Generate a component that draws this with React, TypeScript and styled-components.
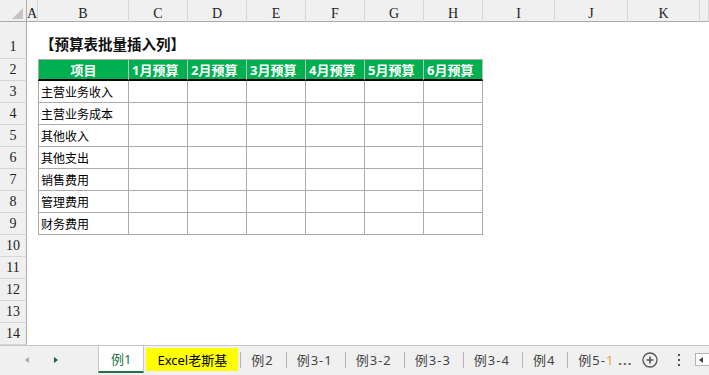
import React from "react";
import styled, { createGlobalStyle } from "styled-components";

const GlobalStyle = createGlobalStyle`
  html, body {
    margin: 0;
    padding: 0;
    background: #ffffff;
  }
  #root {
    width: 709px;
    height: 375px;
    overflow: hidden;
  }
`;

const LETTERS = ["A", "B", "C", "D", "E", "F", "G", "H", "I", "J", "K", ""];
const MONTHS = [1, 2, 3, 4, 5, 6];
const ITEMS = ["主营业务收入", "主营业务成本", "其他收入", "其他支出", "销售费用", "管理费用", "财务费用"];
const TABS = ["例2", "例3-1", "例3-2", "例3-3", "例3-4", "例4"];

const Window = styled.div`
  width: 709px;
  height: 375px;
  display: flex;
  flex-direction: column;
  font-family: "Noto Sans", "Noto Sans CJK SC", sans-serif;
`;

const Sheet = styled.div`
  display: grid;
  grid-template-columns: 27px 11px 91px repeat(6, 59px) 72px 73px 72px 1fr;
  grid-template-rows: 22px 37px repeat(13, 22px);
  background: #ffffff;
`;

const Corner = styled.div`
  position: relative;
  background: #f0f0f0;
  border-right: 1px solid #ababab;
  border-bottom: 1px solid #ababab;
  box-sizing: border-box;

  &::after {
    content: "";
    position: absolute;
    right: 3px;
    bottom: 2px;
    width: 0;
    height: 0;
    border-left: 11px solid transparent;
    border-bottom: 11px solid #c4c4c4;
  }
`;

const ColHead = styled.div`
  display: flex;
  justify-content: center;
  align-items: center;
  padding-top: 6px;
  box-sizing: border-box;
  background: #f0f0f0;
  border-right: 1px solid #d6d6d6;
  border-bottom: 1px solid #ababab;
  font-family: "Liberation Serif", "DejaVu Serif", serif;
  font-size: 14px;
  color: #222;
`;

const RowHead = styled.div<{ $tall?: boolean }>`
  display: flex;
  justify-content: center;
  align-items: ${({ $tall }) => ($tall ? "flex-end" : "center")};
  padding-bottom: ${({ $tall }) => ($tall ? "3px" : "0")};
  box-sizing: border-box;
  background: #f0f0f0;
  border-right: 1px solid #ababab;
  border-bottom: 1px solid #d6d6d6;
  font-family: "Liberation Serif", "DejaVu Serif", serif;
  font-size: 14px;
  color: #222;
`;

const Blank = styled.div<{ $span: string }>`
  grid-column: ${({ $span }) => $span};
`;

const Title = styled.div`
  grid-column: 3 / -1;
  display: flex;
  align-items: flex-end;
  padding: 0 0 7px 2px;
  font-family: "Noto Sans CJK SC", sans-serif;
  font-weight: 700;
  font-size: 14.5px;
  line-height: 16px;
  color: #111;
`;

const Cell = styled.div<{ $kind: "head" | "body"; $first?: boolean }>`
  display: flex;
  align-items: center;
  box-sizing: border-box;
  white-space: nowrap;
  overflow: hidden;
  font-family: "Noto Sans", "Noto Sans CJK SC", sans-serif;
  border-right: 1px solid
    ${({ $kind }) => ($kind === "head" ? "#bdbdbd" : "#ababab")};
  border-left: ${({ $first }) => ($first ? "1px solid #ababab" : "none")};
  ${({ $kind, $first }) =>
    $kind === "head"
      ? `
    background: #00b050;
    color: #ffffff;
    font-weight: 700;
    font-size: 13px;
    border-top: 1px solid #ababab;
    border-bottom: 2px solid #000000;
    justify-content: ${$first ? "center" : "flex-start"};
    padding-left: ${$first ? "0" : "3px"};
  `
      : `
    color: #000000;
    font-size: 12px;
    border-bottom: 1px solid #ababab;
    padding-left: 2px;
  `}
`;

const TabBar = styled.div`
  flex: 1;
  display: flex;
  align-items: stretch;
  overflow: hidden;
  white-space: nowrap;
  background: #f0f0f0;
  border-top: 1px solid #c6c6c6;
  padding-bottom: 2px;
  box-sizing: border-box;
  font-size: 13px;
  color: #444;

  & > * {
    flex: none;
  }
`;

const Nav = styled.div`
  width: 98px;
  display: flex;
  align-items: center;
  padding-left: 25px;
  gap: 25px;
  box-sizing: border-box;
`;

const Arrow = styled.span<{ $dir: "left" | "right"; $color: string }>`
  width: 0;
  height: 0;
  border-top: 3px solid transparent;
  border-bottom: 3px solid transparent;
  ${({ $dir, $color }) =>
    $dir === "left"
      ? `border-right: 4px solid ${$color};`
      : `border-left: 4px solid ${$color};`}
`;

const ActiveTab = styled.div`
  display: flex;
  align-items: center;
  padding: 0 12px 0 12px;
  margin-top: -1px;
  background: #ffffff;
  border-left: 1px solid #c6c6c6;
  border-right: 1px solid #c6c6c6;
  border-bottom: 2px solid #217346;
  color: #217346;
`;

const MarkedTab = styled.div`
  display: flex;
  align-items: center;
  margin: 2px 2px 2px 2px;
  padding: 0 11px 0 11px;
  background: #ffff00;
  color: #000;
`;

const Tab = styled.div<{ $clip?: number }>`
  display: flex;
  align-items: center;
  padding: 0 12px 0 11px;
  position: relative;
  letter-spacing: 1px;
  overflow: hidden;
  ${({ $clip }) => ($clip ? `width: ${$clip}px; padding-right: 0; box-sizing: border-box;` : "")}

  &::before {
    content: "";
    position: absolute;
    left: 0;
    top: 6px;
    bottom: 5px;
    width: 1px;
    background: #b4b4b4;
  }
`;

const Fade = styled.span`
  color: #e8a33d;
`;

const More = styled.div`
  display: flex;
  align-items: center;
  padding-left: 4px;
  letter-spacing: 1px;
  font-weight: 700;
  color: #555;
`;

const Tools = styled.div`
  display: flex;
  align-items: center;
  gap: 19px;
  padding-left: 10px;
`;

const ScrollBox = styled.div`
  margin-left: 14px;
  width: 20px;
  height: 13px;
  align-self: center;
  border: 1px solid #b4b4b4;
  border-right: none;
  background: #ffffff;
  display: flex;
  align-items: center;
  padding-left: 3px;
  box-sizing: border-box;
`;

const PlusCircle = () => (
  <svg width="16" height="16" viewBox="0 0 16 16">
    <circle cx="8" cy="8" r="7" fill="none" stroke="#555" strokeWidth="1.3" />
    <path d="M8 4.5v7M4.5 8h7" stroke="#555" strokeWidth="1.6" />
  </svg>
);

const Dots = () => (
  <svg width="4" height="14" viewBox="0 0 4 14">
    <rect x="1" y="1" width="2" height="2" fill="#555" />
    <rect x="1" y="6" width="2" height="2" fill="#555" />
    <rect x="1" y="11" width="2" height="2" fill="#555" />
  </svg>
);

export default function App() {
  return (
    <>
      <GlobalStyle />
      <Window>
        <Sheet>
          <Corner />
          {LETTERS.map((l, i) => (
            <ColHead key={i}>{l}</ColHead>
          ))}

          <RowHead $tall>1</RowHead>
          <Blank $span="2 / 3" />
          <Title>【预算表批量插入列】</Title>

          <RowHead>2</RowHead>
          <Blank $span="2 / 3" />
          <Cell $kind="head" $first>
            项目
          </Cell>
          {MONTHS.map((m) => (
            <Cell key={m} $kind="head">
              {m}月预算
            </Cell>
          ))}
          <Blank $span="10 / -1" />

          {ITEMS.map((item, i) => (
            <React.Fragment key={item}>
              <RowHead>{i + 3}</RowHead>
              <Blank $span="2 / 3" />
              <Cell $kind="body" $first>
                {item}
              </Cell>
              {MONTHS.map((m) => (
                <Cell key={m} $kind="body" />
              ))}
              <Blank $span="10 / -1" />
            </React.Fragment>
          ))}

          {[10, 11, 12, 13, 14].map((n) => (
            <React.Fragment key={n}>
              <RowHead>{n}</RowHead>
              <Blank $span="2 / -1" />
            </React.Fragment>
          ))}
        </Sheet>

        <TabBar>
          <Nav>
            <Arrow $dir="left" $color="#a6a6a6" />
            <Arrow $dir="right" $color="#1e5e3a" />
          </Nav>
          <ActiveTab>例1</ActiveTab>
          <MarkedTab>Excel老斯基</MarkedTab>
          {TABS.map((t) => (
            <Tab key={t}>{t}</Tab>
          ))}
          <Tab $clip={47}>
            例5-<Fade>1</Fade>
          </Tab>
          <More>...</More>
          <Tools>
            <PlusCircle />
            <Dots />
          </Tools>
          <ScrollBox>
            <Arrow $dir="left" $color="#444" />
          </ScrollBox>
        </TabBar>
      </Window>
    </>
  );
}
